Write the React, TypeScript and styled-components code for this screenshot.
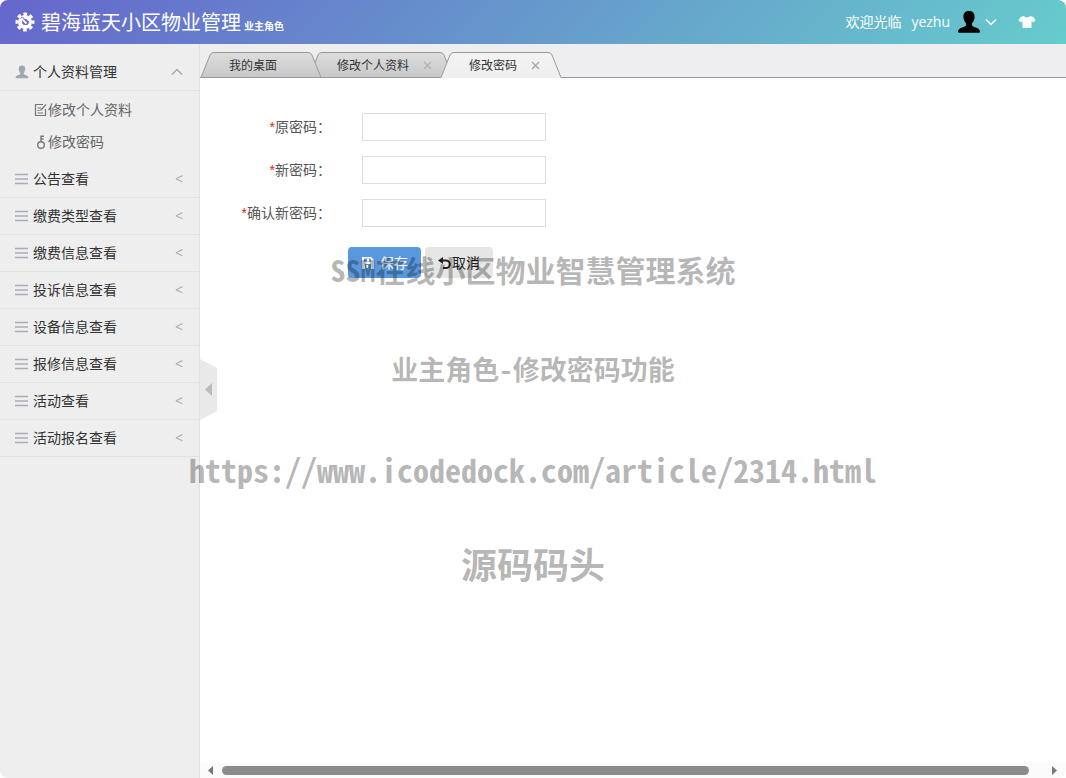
import React from "react";
import styled, { createGlobalStyle } from "styled-components";

const GlobalStyle = createGlobalStyle`
  * { box-sizing: border-box; }
  body {
    margin: 0;
    background: #fff;
    color: #333;
    font: 14px/20px "Open Sans", "Noto Sans CJK SC", sans-serif;
  }
  button, input { font: inherit; color: inherit; }
`;

const Frame = styled.div`
  position: relative;
  display: flex;
  flex-direction: column;
  min-height: 100vh;
  overflow: hidden;
  border-radius: 8px;
  background: #fff;
`;

const Header = styled.header`
  display: flex;
  align-items: center;
  justify-content: space-between;
  height: 44px;
  padding: 0 30px 0 15px;
  color: #fff;
  background: linear-gradient(135deg, #66c, #6cc);
`;

const Brand = styled.div`
  display: flex;
  align-items: center;
  gap: 6px;
`;

const BrandTitle = styled.h1`
  margin: 0;
  padding-top: 4px;
  font-size: 20px;
  line-height: 40px;
  font-weight: 400;
`;

const Role = styled.small`
  margin-left: 3px;
  font-size: 10px;
  font-weight: 700;
`;

const UserArea = styled.div`
  display: flex;
  align-items: center;
`;

const Welcome = styled.span`
  margin-right: 10px;
`;

const UserName = styled.span`
  margin-right: 3px;
`;

const IconButton = styled.button<{ $gap?: number }>`
  display: flex;
  align-items: center;
  gap: 4px;
  margin: 0 0 0 ${(p) => p.$gap ?? 0}px;
  padding: 0;
  border: 0;
  background: none;
  cursor: pointer;
`;

const Body = styled.div`
  display: flex;
  flex: 1;
`;

const Sidebar = styled.nav`
  flex: 0 0 200px;
  padding-top: 10px;
  border-right: 1px solid #e0e0e0;
  background: #eee;
`;

const MenuItem = styled.button`
  display: flex;
  align-items: center;
  gap: 4px;
  width: 100%;
  height: 37px;
  padding: 0 16px 0 15px;
  border: 0;
  border-bottom: 1px solid #e2e2e2;
  background: none;
  text-align: left;
  cursor: pointer;
`;

const MenuText = styled.span`
  flex: 1;
`;

const Mark = styled.span`
  color: #aaa;
`;

const SubMenu = styled.div`
  display: flex;
  flex-direction: column;
  padding: 3px 0 3px 34px;
`;

const SubLink = styled.a`
  display: flex;
  align-items: center;
  height: 32px;
  color: #666;
  text-decoration: none;
`;

const Main = styled.main`
  position: relative;
  display: flex;
  flex: 1;
  flex-direction: column;
  min-width: 0;
`;

const TabBar = styled.div`
  display: flex;
  align-items: flex-end;
  height: 34px;
  padding-left: 1px;
  background: #eeeef0;
  box-shadow: inset 0 -1px #999;
`;

const Tab = styled.div<{ $width: number; $level: number }>`
  position: relative;
  z-index: ${(p) => p.$level};
  display: flex;
  align-items: center;
  gap: 14px;
  width: ${(p) => p.$width}px;
  height: 26px;
  padding: 1px 0 0 28px;
  font-size: 12px;

  & + & { margin-left: -12px; }
`;

const TabShape = styled.svg`
  position: absolute;
  inset: 0;
  z-index: -1;
`;

const TabClose = styled.button`
  display: flex;
  padding: 0;
  border: 0;
  background: none;
  cursor: pointer;
`;

const Collapse = styled.button`
  position: absolute;
  top: 315px;
  left: 0;
  width: 17px;
  height: 61px;
  padding: 0;
  border: 0;
  background: none;
  cursor: pointer;
`;

const Form = styled.form`
  display: flex;
  flex: 1;
  flex-direction: column;
  gap: 15px;
  padding-top: 35px;
`;

const Field = styled.div`
  display: flex;
  align-items: center;
  gap: 31px;
`;

const Label = styled.label`
  width: 131px;
  color: #555;
  text-align: right;
`;

const Star = styled.span`
  color: #d22;
  font-family: "Liberation Sans", sans-serif;
`;

const Input = styled.input`
  width: 184px;
  height: 28px;
  padding: 0 6px;
  border: 1px solid #ddd;
  background: #fff;
`;

const Actions = styled.div`
  display: flex;
  gap: 4px;
  padding: 5px 0 0 148px;
`;

const Button = styled.button<{ $primary?: boolean }>`
  display: flex;
  align-items: center;
  gap: ${(p) => (p.$primary ? 5 : 0)}px;
  height: 31px;
  padding: 0 13px;
  border: 0;
  border-radius: 4px;
  color: ${(p) => (p.$primary ? "#fff" : "#222")};
  background: ${(p) => (p.$primary ? "#5a98de" : "#e6e6e6")};
  cursor: pointer;
`;

const ScrollBar = styled.div`
  display: flex;
  align-items: center;
  gap: 7px;
  height: 15px;
  padding: 0 8px 0 7px;
  background: #fbfbfb;
`;

const ScrollThumb = styled.div`
  flex: 1;
  height: 9px;
  margin-right: 14px;
  border-radius: 5px;
  background: #8b8b8b;
`;

const Overlay = styled.div`
  position: absolute;
  inset: 249px 0 auto;
  z-index: 10;
  display: flex;
  flex-direction: column;
  align-items: center;
  gap: 60px;
  color: rgba(0, 0, 0, 0.3);
  font-family: "Noto Sans CJK SC", sans-serif;
  font-weight: 700;
  font-feature-settings: "hwid";
  white-space: nowrap;
  pointer-events: none;
`;

const OverlayLine = styled.div<{ $size: number }>`
  font-size: ${(p) => p.$size}px;
  line-height: 40px;

  &:last-child { line-height: 28px; }
`;

const GearIcon = () => (
  <svg width="20" height="20" viewBox="0 0 20 20" fill="none" stroke="#fff">
    <circle cx="10" cy="10" r="5" strokeWidth="4" />
    <circle cx="10" cy="10" r="8" strokeWidth="3" strokeDasharray="3.6 2.68" strokeDashoffset="1.8" />
    <circle cx="10" cy="10" r="2.5" fill="#66c" stroke="none" />
    <path d="M5.5 6.5l2-1.5 3 3.5M10 12.5l3-.5.5-3" stroke="#66c" strokeWidth="1" />
    <path d="M8 8l3.5 3.5" strokeWidth="1.8" />
  </svg>
);

const PERSON =
  "M12 1C8.6 1 6.4 3 6.4 6.500c0 2.700 1 5.300 2.600 6.700v2.300C8 17.300 1 17.500 1 21.500c0 .8.5 1.300 1.300 1.300h19.400c.8 0 1.300-.5 1.300-1.300 0-4-7-4.200-8-6v-2.300c1.600-1.400 2.600-4 2.600-6.700C17.600 3 15.400 1 12 1z";

const PersonIcon = ({ size, color }: { size: number; color: string }) => (
  <svg width={size} height={size} viewBox="0 0 24 24" fill={color}>
    <path d={PERSON} />
  </svg>
);

const Chevron = ({ up, color }: { up?: boolean; color: string }) => (
  <svg width="12" height="8" viewBox="0 0 12 8" fill="none" stroke={color} strokeWidth="1.5">
    <path d={up ? "M1 6.5L6 1.5l5 5" : "M1 1.5l5 5 5-5"} />
  </svg>
);

const ShirtIcon = () => (
  <svg width="18" height="14" viewBox="0 0 18 14" fill="#fff">
    <path d="M5.8 1c1.300 1.800 5.100 1.800 6.400 0l3.600 1.200L17.500 5.800 15 7.200 13.500 6.300V13h-9V6.300L3 7.200.5 5.800 2.200 2.200z" />
  </svg>
);

const ListIcon = () => (
  <svg width="14" height="12" viewBox="0 0 14 12" stroke="#a9adb8" strokeWidth="1.4">
    <path d="M0 1.5h13M0 6h13M0 10.5h13" />
  </svg>
);

const EditIcon = () => (
  <svg width="14" height="14" viewBox="0 0 14 14" fill="none" stroke="#777" strokeWidth="1.2">
    <path d="M9 1.5H1.5v11h10V6M3.5 5H7M3.5 7.5h2M3.5 10H9M6.5 7.5l5.5-6" />
  </svg>
);

const KeyIcon = () => (
  <svg width="14" height="14" viewBox="0 0 14 14" fill="none" stroke="#777" strokeWidth="1.4">
    <circle cx="7" cy="10" r="3.3" />
    <path d="M7 6.700V.5M7 1.2h3M7 4h2.5" />
  </svg>
);

const CloseIcon = ({ color }: { color: string }) => (
  <svg width="9" height="9" viewBox="0 0 9 9" stroke={color} strokeWidth="1.5">
    <path d="M1 1l7 7M8 1L1 8" />
  </svg>
);

const SaveIcon = () => (
  <svg width="14" height="14" viewBox="0 0 14 14">
    <path fill="#fff" fillRule="evenodd" d="M1 1h9l3 3v9H1zM3 2.5V6h7V2.5zM4 8v5h6V8z" />
    <path fill="#fff" d="M6 2.5h2v3H6zM5 9h2v3H5z" />
  </svg>
);

const UndoIcon = () => (
  <svg width="14" height="14" viewBox="0 0 14 14" fill="none" stroke="#222" strokeWidth="2">
    <path d="M3 4.5h5a3.8 3.8 0 0 1 0 7.6H5" />
    <path fill="#222" stroke="none" d="M0 4.5L5 1v7z" />
  </svg>
);

const Arrow = ({ right }: { right?: boolean }) => (
  <svg width="8" height="9" viewBox="0 0 8 9" fill="#777">
    <path d={right ? "M2 0v9l5-4.5z" : "M6 0v9L1 4.5z"} />
  </svg>
);

const tabs = [
  { title: "我的桌面", width: 120, level: 2, closable: false, active: false },
  { title: "修改个人资料", width: 144, level: 1, closable: true, active: false },
  { title: "修改密码", width: 120, level: 3, closable: true, active: true },
];

const menus = [
  "公告查看",
  "缴费类型查看",
  "缴费信息查看",
  "投诉信息查看",
  "设备信息查看",
  "报修信息查看",
  "活动查看",
  "活动报名查看",
];

const fields = [
  { id: "old", label: "原密码：" },
  { id: "new", label: "新密码：" },
  { id: "confirm", label: "确认新密码：" },
];

const overlayLines = [
  { text: "SSM在线小区物业智慧管理系统", size: 30 },
  { text: "业主角色-修改密码功能", size: 27 },
  { text: "https://www.icodedock.com/article/2314.html", size: 32 },
  { text: "源码码头", size: 36 },
];

const TabBackground = ({ width, active }: { width: number; active: boolean }) => {
  const outline = `M0 25.5L9 3Q10 .5 13 .5H${width - 13}Q${width - 10} .5 ${width - 9} 3L${width} 25.5`;
  const id = active ? "tab-active" : "tab-idle";
  return (
    <TabShape width={width} height="26" viewBox={`0 0 ${width} 26`} aria-hidden="true">
      <defs>
        <linearGradient id={id} x1="0" y1="0" x2="0" y2="1">
          <stop offset="0" stopColor={active ? "#f2f3f2" : "#dcdddc"} />
          <stop offset="1" stopColor={active ? "#eeeeef" : "#c8c8ca"} />
        </linearGradient>
      </defs>
      <path d={active ? `${outline}V26H0z` : outline} fill={`url(#${id})`} />
      <path d={active ? outline : `${outline}z`} fill="none" stroke="#999" />
    </TabShape>
  );
};

export default function App() {
  return (
    <Frame>
      <GlobalStyle />
      <Header>
        <Brand>
          <GearIcon />
          <BrandTitle>
            碧海蓝天小区物业管理
            <Role>业主角色</Role>
          </BrandTitle>
        </Brand>
        <UserArea>
          <Welcome>欢迎光临</Welcome>
          <IconButton type="button" aria-label="yezhu">
            <UserName>yezhu</UserName>
            <PersonIcon size={24} color="#000" />
            <Chevron color="#fff" />
          </IconButton>
          <IconButton type="button" aria-label="换肤" $gap={21}>
            <ShirtIcon />
          </IconButton>
        </UserArea>
      </Header>
      <Body>
        <Sidebar>
          <MenuItem type="button">
            <PersonIcon size={14} color="#a0a7af" />
            <MenuText>个人资料管理</MenuText>
            <Chevron up color="#aaa" />
          </MenuItem>
          <SubMenu>
            <SubLink href="#profile">
              <EditIcon />
              修改个人资料
            </SubLink>
            <SubLink href="#password">
              <KeyIcon />
              修改密码
            </SubLink>
          </SubMenu>
          {menus.map((name) => (
            <MenuItem type="button" key={name}>
              <ListIcon />
              <MenuText>{name}</MenuText>
              <Mark>&lt;</Mark>
            </MenuItem>
          ))}
        </Sidebar>
        <Main>
          <TabBar>
            {tabs.map((tab) => (
              <Tab key={tab.title} $width={tab.width} $level={tab.level}>
                <TabBackground width={tab.width} active={tab.active} />
                <span>{tab.title}</span>
                {tab.closable && (
                  <TabClose type="button" aria-label={`关闭${tab.title}`}>
                    <CloseIcon color={tab.active ? "#aaa" : "#b4b4b4"} />
                  </TabClose>
                )}
              </Tab>
            ))}
          </TabBar>
          <Form onSubmit={(e: React.FormEvent) => e.preventDefault()}>
            {fields.map((f) => (
              <Field key={f.id}>
                <Label htmlFor={f.id}>
                  <Star>*</Star>
                  {f.label}
                </Label>
                <Input id={f.id} type="password" />
              </Field>
            ))}
            <Actions>
              <Button type="submit" $primary>
                <SaveIcon />
                保存
              </Button>
              <Button type="button">
                <UndoIcon />
                取消
              </Button>
            </Actions>
          </Form>
          <ScrollBar>
            <Arrow />
            <ScrollThumb />
            <Arrow right />
          </ScrollBar>
          <Collapse type="button" aria-label="收起菜单">
            <svg width="17" height="61" viewBox="0 0 17 61">
              <path fill="#e9e9e9" d="M0 0l17 9v43L0 61z" />
              <path fill="#bbb" d="M12 24v13l-7-6.5z" />
            </svg>
          </Collapse>
        </Main>
      </Body>
      <Overlay>
        {overlayLines.map((line) => (
          <OverlayLine key={line.text} $size={line.size}>
            {line.text}
          </OverlayLine>
        ))}
      </Overlay>
    </Frame>
  );
}
